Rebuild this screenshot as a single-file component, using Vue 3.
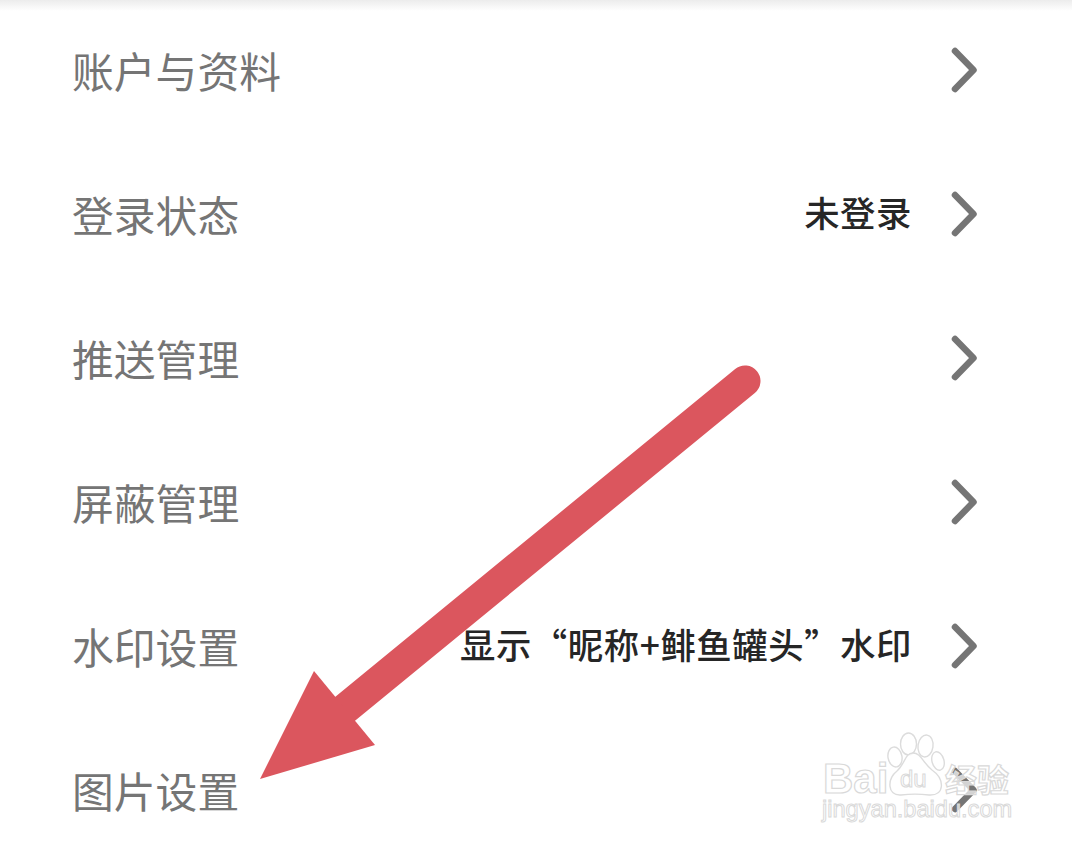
<script setup>
const rows = [
  { label: '账户与资料', value: '' },
  { label: '登录状态', value: '未登录' },
  { label: '推送管理', value: '' },
  { label: '屏蔽管理', value: '' },
  { label: '水印设置', value: '显示“昵称+鲱鱼罐头”水印' },
  { label: '图片设置', value: '' },
]
</script>

<template>
  <div class="page">
    <div class="shade"></div>
    <ul class="list">
      <li v-for="row in rows" :key="row.label" class="row">
        <span class="label">{{ row.label }}</span>
        <span v-if="row.value" class="value">{{ row.value }}</span>
        <svg class="chev" width="30" height="48" viewBox="0 0 30 48">
          <path d="M5 5 L23.5 24 L5 43" fill="none" stroke="#757575" stroke-width="6.5" stroke-linecap="round" stroke-linejoin="round" />
        </svg>
      </li>
    </ul>

    <svg class="arrow" width="1072" height="848" viewBox="0 0 1072 848">
      <path d="M745 381 L340 713" stroke="#db565e" stroke-width="31" stroke-linecap="round" fill="none" />
      <polygon points="314,671 375,745 260,779" fill="#db565e" />
    </svg>

    <div class="mark">
      <span class="mark-bai">Bai</span>
      <svg class="paw" width="66" height="70" viewBox="0 0 66 70">
        <g fill="rgba(255,255,255,.75)" stroke="#dcdcdc" stroke-width="1.4">
          <ellipse cx="10" cy="27" rx="7" ry="10" transform="rotate(-10 10 27)" />
          <ellipse cx="23.5" cy="14" rx="8" ry="11" />
          <ellipse cx="40.5" cy="16" rx="7.5" ry="11" transform="rotate(8 40.5 16)" />
          <ellipse cx="53" cy="31" rx="6" ry="9.5" transform="rotate(-15 53 31)" />
          <path d="M28 23 C36 23 38 33 47 40 C60 49 60 66 44 65 C36 64 24 64 16 65 C2 66 2 49 12 41 C20 34 20 23 28 23 Z" />
        </g>
      </svg>
      <span class="mark-du">du</span>
      <span class="mark-cn">经验</span>
      <span class="mark-url">jingyan.baidu.com</span>
    </div>
  </div>
</template>

<style>
html, body { margin: 0; background: #fff; }
</style>

<style scoped>
.page {
  position: relative;
  width: 1072px;
  height: 848px;
  overflow: hidden;
  background: #fff;
  font-family: "Noto Sans CJK SC", "Noto Sans", sans-serif;
}
.shade {
  position: absolute;
  inset: 0 0 auto 0;
  height: 11px;
  background: linear-gradient(#ececec, #ffffff);
}
.list {
  list-style: none;
  margin: -2px 0 0;
  padding: 0 93px 0 72px;
}
.row {
  display: flex;
  align-items: center;
  height: 144px;
}
.label {
  flex: 1;
  font-size: 41.8px;
  color: #757575;
  line-height: 1;
  padding-top: 1px;
}
.value {
  font-size: 35.4px;
  font-weight: 500;
  letter-spacing: 0.55px;
  color: #262626;
  line-height: 1;
  margin-right: 38px;
  padding-bottom: 4px;
  white-space: nowrap;
}
.chev {
  flex: none;
  width: 30px;
  margin-right: -1px;
}
.arrow {
  position: absolute;
  left: 0;
  top: 0;
}
.mark {
  position: absolute;
  left: 820px;
  top: 733px;
  width: 200px;
  height: 100px;
  font-family: "Liberation Sans", sans-serif;
  color: rgba(255, 255, 255, 0.7);
  -webkit-text-stroke: 1.2px #d9d9d9;
}
.mark span { position: absolute; white-space: nowrap; line-height: 1; }
.mark-bai { left: 3px; top: 25px; font-size: 42px; font-weight: 700; }
.paw { position: absolute; left: 65px; top: -3px; }
.mark-du { left: 80px; top: 34px; font-size: 24px; -webkit-text-stroke-width: 1px; }
.mark-cn { left: 125px; top: 29px; font-size: 32px; font-family: "Noto Sans CJK SC", sans-serif; font-weight: 700; }
.mark-url { left: 2px; top: 65px; font-size: 23.6px; -webkit-text-stroke-width: 1px; }
</style>
